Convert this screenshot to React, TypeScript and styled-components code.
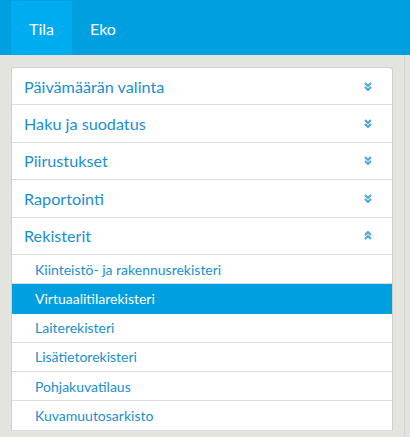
import React from "react";
import styled, { createGlobalStyle } from "styled-components";

const Global = createGlobalStyle`
  html, body { margin: 0; padding: 0; background: #e4e4df; }
  body { font-family: Lato, "Open Sans", sans-serif; }
  * { box-sizing: border-box; }
`;

const Header = styled.header`
  height: 55px;
  background: #009fe0;
  display: flex;
  align-items: stretch;
  padding-left: 11px;
`;

const Tab = styled.div<{ $active?: boolean }>`
  margin-top: 1px;
  padding: 0 18px;
  display: flex;
  align-items: center;
  color: #fff;
  font-size: 16px;
  background: ${(p) => (p.$active ? "#00acf0" : "transparent")};
`;

const Body = styled.div`
  display: flex;
`;

const Content = styled.div`
  flex: 0 0 405px;
  padding: 12px 11px 0 11px;
  border-right: 1px solid #d2d2ce;
  min-height: 382px;
`;

const Panel = styled.div`
  background: #fff;
  border: 1px solid #cfcfcb;
  border-bottom: none;
  border-radius: 3px 3px 0 0;
`;

const Row = styled.div`
  height: 37.4px;
  display: flex;
  align-items: center;
  justify-content: space-between;
  padding: 0 20px 0 12px;
  border-bottom: 1px solid #dcdcdc;
  color: #1a8fcf;
  font-size: 16.2px;
`;

const SubRow = styled.div<{ $selected?: boolean }>`
  height: 29.3px;
  display: flex;
  align-items: center;
  padding-left: 23px;
  border-bottom: 1px solid ${(p) => (p.$selected ? "#009fe0" : "#dcdcdc")};
  background: ${(p) => (p.$selected ? "#009fe0" : "#fff")};
  color: ${(p) => (p.$selected ? "#fff" : "#1a8fcf")};
  font-size: 14px;
`;

const Chevrons = ({ up }: { up?: boolean }) => (
  <svg width="8" height="9" viewBox="0 0 8 9" style={{ transform: up ? "rotate(180deg)" : undefined }}>
    <path d="M1 1 L4 4 L7 1 M1 5 L4 8 L7 5" fill="none" stroke="#4aa6df" strokeWidth="2" />
  </svg>
);

const sections = ["Päivämäärän valinta", "Haku ja suodatus", "Piirustukset", "Raportointi"];
const registers = [
  "Kiinteistö- ja rakennusrekisteri",
  "Virtuaalitilarekisteri",
  "Laiterekisteri",
  "Lisätietorekisteri",
  "Pohjakuvatilaus",
  "Kuvamuutosarkisto",
];

export default function App() {
  return (
    <>
      <Global />
      <Header>
        <Tab $active>Tila</Tab>
        <Tab>Eko</Tab>
      </Header>
      <Body>
        <Content>
          <Panel>
            {sections.map((s) => (
              <Row key={s}>
                <span>{s}</span>
                <Chevrons />
              </Row>
            ))}
            <Row>
              <span>Rekisterit</span>
              <Chevrons up />
            </Row>
            {registers.map((r, i) => (
              <SubRow key={r} $selected={i === 1}>
                {r}
              </SubRow>
            ))}
          </Panel>
        </Content>
      </Body>
    </>
  );
}
